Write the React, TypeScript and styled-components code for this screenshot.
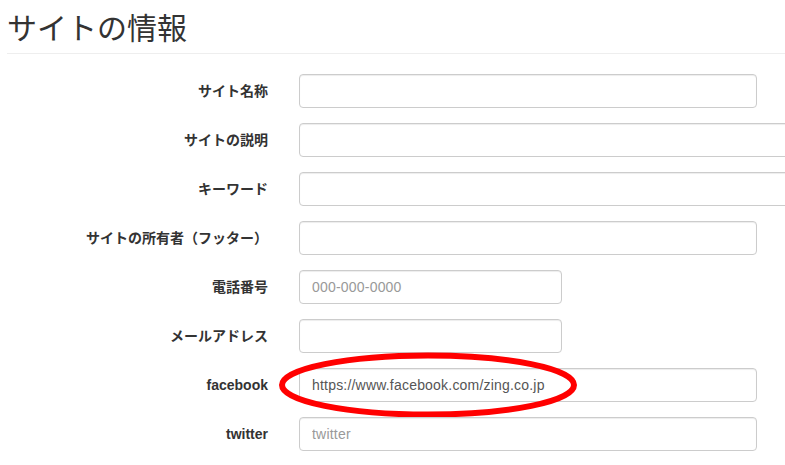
import React from "react";
import styled, { createGlobalStyle } from "styled-components";

const Global = createGlobalStyle`
  html, body { margin: 0; padding: 0; background: #fff; }
  body {
    font-family: "Liberation Sans", "Noto Sans CJK JP", sans-serif;
    color: #333;
    font-size: 14px;
  }
`;

const Page = styled.div`
  width: 785px;
  height: 465px;
  overflow: hidden;
  position: relative;
`;

const Header = styled.div`
  margin-left: 7px;
  border-bottom: 1px solid #eee;
  padding-top: 10px;
  height: 54px;
  box-sizing: border-box;
`;

const Title = styled.h1`
  margin: 0;
  font-family: "Noto Sans CJK JP", sans-serif;
  font-weight: 400;
  font-size: 30px;
  line-height: 33px;
  color: #333;
`;

const Form = styled.form`
  padding-top: 20px;
  display: flex;
  flex-direction: column;
  gap: 15px;
`;

const Row = styled.div`
  display: flex;
  align-items: center;
  position: relative;
`;

const Label = styled.label`
  width: 268px;
  margin-right: 31px;
  flex: none;
  text-align: right;
  font-weight: 700;
  font-size: 14px;
  line-height: 20px;
  color: #333;
  white-space: nowrap;
`;

const Input = styled.input<{ $w: number }>`
  flex: none;
  width: ${(p) => p.$w}px;
  height: 34px;
  box-sizing: border-box;
  padding: 6px 12px;
  border: 1px solid #ccc;
  border-radius: 4px;
  box-shadow: inset 0 1px 1px rgba(0, 0, 0, 0.075);
  font-family: "Liberation Sans", "Noto Sans CJK JP", sans-serif;
  font-size: 14px;
  letter-spacing: 0.2px;
  color: #555;
  background: #fff;
  outline: none;
  &::placeholder { color: #999; opacity: 1; }
`;

const Circle = styled.svg`
  position: absolute;
  left: 276px;
  top: -19px;
  width: 306px;
  height: 72px;
  pointer-events: none;
  overflow: visible;
`;

const fields: { label: string; w: number; value?: string; ph?: string; mark?: boolean }[] = [
  { label: "サイト名称", w: 458 },
  { label: "サイトの説明", w: 520 },
  { label: "キーワード", w: 520 },
  { label: "サイトの所有者（フッター）", w: 458 },
  { label: "電話番号", w: 263, ph: "000-000-0000" },
  { label: "メールアドレス", w: 263 },
  { label: "facebook", w: 458, value: "https://www.facebook.com/zing.co.jp", mark: true },
  { label: "twitter", w: 458, ph: "twitter" },
];

export default function App() {
  return (
    <Page>
      <Global />
      <Header>
        <Title>サイトの情報</Title>
      </Header>
      <Form>
        {fields.map((f) => (
          <Row key={f.label}>
            <Label>{f.label}</Label>
            <Input $w={f.w} defaultValue={f.value} placeholder={f.ph} />
            {f.mark && (
              <Circle viewBox="0 0 306 72">
                <ellipse cx="152" cy="36" rx="146" ry="29.5" fill="none" stroke="#f00" strokeWidth="6" />
              </Circle>
            )}
          </Row>
        ))}
      </Form>
    </Page>
  );
}
